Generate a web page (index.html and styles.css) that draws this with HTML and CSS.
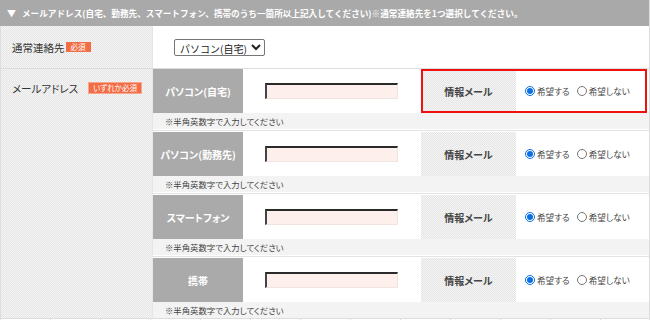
FILE: index.html
```html
<!DOCTYPE html>
<html lang="ja">
<head>
<meta charset="utf-8">
<link rel="stylesheet" href="styles.css">
</head>
<body>
<div class="form">
  <div class="header"><span class="tri">▼</span>メールアドレス(自宅、勤務先、スマートフォン、携帯のうち一箇所以上記入してください)※通常連絡先を1つ選択してください。</div>
  <div class="section row-contact">
    <div class="head head-center">通常連絡先<span class="badge">必須</span></div>
    <div class="body body-contact">
      <select class="sel"><option>パソコン(自宅)</option><option>パソコン(勤務先)</option><option>スマートフォン</option><option>携帯</option></select>
    </div>
  </div>
  <div class="section row-mail">
    <div class="head head-top">メールアドレス<span class="badge badge-wide">いずれか必須</span></div>
    <div class="body">
      <div class="block">
        <div class="main">
          <div class="type">パソコン(自宅)</div>
          <div class="input-cell"><input class="addr" type="text"></div>
          <div class="info highlight">
            <div class="info-label">情報メール</div>
            <div class="radios"><label class="opt"><input type="radio" name="m1" checked>希望する</label><label class="opt"><input type="radio" name="m1">希望しない</label></div>
          </div>
        </div>
        <div class="note">※半角英数字で入力してください</div>
      </div>
      <div class="block">
        <div class="main">
          <div class="type">パソコン(勤務先)</div>
          <div class="input-cell"><input class="addr" type="text"></div>
          <div class="info">
            <div class="info-label">情報メール</div>
            <div class="radios"><label class="opt"><input type="radio" name="m2" checked>希望する</label><label class="opt"><input type="radio" name="m2">希望しない</label></div>
          </div>
        </div>
        <div class="note">※半角英数字で入力してください</div>
      </div>
      <div class="block">
        <div class="main">
          <div class="type">スマートフォン</div>
          <div class="input-cell"><input class="addr" type="text"></div>
          <div class="info">
            <div class="info-label">情報メール</div>
            <div class="radios"><label class="opt"><input type="radio" name="m3" checked>希望する</label><label class="opt"><input type="radio" name="m3">希望しない</label></div>
          </div>
        </div>
        <div class="note">※半角英数字で入力してください</div>
      </div>
      <div class="block last">
        <div class="main">
          <div class="type">携帯</div>
          <div class="input-cell"><input class="addr" type="text"></div>
          <div class="info">
            <div class="info-label">情報メール</div>
            <div class="radios"><label class="opt"><input type="radio" name="m4" checked>希望する</label><label class="opt"><input type="radio" name="m4">希望しない</label></div>
          </div>
        </div>
        <div class="note">※半角英数字で入力してください</div>
      </div>
    </div>
  </div>
  <div class="strip">
    <span></span><span></span><span></span><span></span><span></span><span></span><span></span><span></span><span></span><span></span><span></span><span></span><span></span>
  </div>
</div>
</body>
</html>
```
FILE: styles.css
```css
html, body {
  margin: 0;
  padding: 0;
  background: #fff;
}
body {
  font-family: "Noto Sans CJK JP", "Noto Sans", sans-serif;
  color: #333;
  width: 650px;
  height: 320px;
  overflow: hidden;
}
.form {
  width: 650px;
  box-sizing: border-box;
  border-right: 1px solid #ddd;
}
.header {
  height: 26px;
  background: #a9a9a9;
  color: #fff;
  font-size: 8.62px;
  font-weight: 700;
  line-height: 26px;
  padding-left: 7px;
  white-space: nowrap;
  overflow: hidden;
}
.tri {
  display: inline-block;
  font-size: 9px;
  margin-right: 6px;
}
.section {
  display: flex;
  border-bottom: 1px solid #ddd;
  border-left: 1px solid #ddd;
}
.row-contact {
  height: 42px;
}
.head {
  width: 152px;
  flex: none;
  box-sizing: border-box;
  padding-left: 11px;
  font-size: 10.5px;
  color: #333;
  font-feature-settings: "palt";
  background-color: #f2f2f2;
  background-image: repeating-conic-gradient(#e4e4e4 0 25%, #f6f6f6 0 50%);
  background-size: 2px 2px;
  display: flex;
  border-right: 1px solid #e6e6e6;
}
.head-center {
  align-items: center;
}
.head-top {
  align-items: flex-start;
  padding-top: 12px;
}
.badge {
  display: inline-block;
  background: #f26c45;
  color: #fff;
  font-size: 7.5px;
  line-height: 10px;
  height: 10px;
  padding: 0 5px;
  margin-left: 1px;
  font-weight: 400;
}
.badge-wide {
  margin-left: 11px;
  padding: 0 4px;
  outline: 1px solid #f7a78e;
}
.head-top .badge-wide {
  margin-top: 2px;
}
.body {
  flex: 1;
  display: flex;
  flex-direction: column;
}
.body-contact {
  flex-direction: row;
  align-items: center;
  padding-left: 21px;
}
.sel {
  width: 91px;
  height: 17px;
  font-family: "Noto Sans CJK JP", sans-serif;
  font-size: 10px;
  padding: 0 1px;
  border: 1px solid #767676;
  border-radius: 2px;
  background: #fff;
  color: #222;
}
.block {
  padding-bottom: 1px;
  border-bottom: 1px solid #e3e3e3;
  margin-bottom: 1px;
}
.block.last {
  padding-bottom: 0;
  border-bottom: none;
  margin-bottom: 0;
}
.main {
  display: flex;
  height: 44px;
}
.type {
  width: 90px;
  flex: none;
  background: #aaaaaa;
  color: #fff;
  font-size: 10px;
  font-weight: 700;
  display: flex;
  align-items: center;
  justify-content: center;
  font-feature-settings: "palt";
}
.input-cell {
  width: 178px;
  flex: none;
  display: flex;
  align-items: center;
  padding-left: 22px;
  box-sizing: border-box;
}
.addr {
  width: 133px;
  height: 16px;
  box-sizing: border-box;
  margin: 0;
  padding: 0 2px;
  background: #fdf0ec;
  border-top: 2px solid #2a2a2a;
  border-left: 2px solid #444;
  border-right: 1px solid #f0e4e0;
  border-bottom: 1px solid #f0e4e0;
  outline: none;
}
.info {
  width: 226px;
  flex: none;
  display: flex;
}
.info.highlight {
  outline: 2px solid #ee1111;
  outline-offset: -2px;
}
.info-label {
  width: 95px;
  flex: none;
  display: flex;
  align-items: center;
  justify-content: center;
  font-size: 10px;
  font-weight: 700;
  color: #444;
  font-feature-settings: "palt";
  background-color: #f2f2f2;
  background-image: repeating-conic-gradient(#e4e4e4 0 25%, #f6f6f6 0 50%);
  background-size: 2px 2px;
}
.radios {
  flex: 1;
  display: flex;
  align-items: center;
  padding-left: 9px;
  gap: 7px;
  font-size: 8.6px;
  color: #444;
  font-feature-settings: "palt";
}
.opt {
  display: flex;
  align-items: center;
  white-space: nowrap;
}
.opt input {
  width: 10px;
  height: 10px;
  margin: 0 2px 0 0;
  accent-color: #0a6fe0;
}
.note {
  height: 16px;
  background: #f3f3f3;
  font-size: 8.4px;
  color: #444;
  line-height: 16px;
  padding-left: 12px;
  font-feature-settings: "palt";
}
.strip {
  display: flex;
  height: 3px;
}
.strip span {
  width: 50px;
  flex: none;
  border-left: 1px solid #ddd;
  box-sizing: border-box;
}
```
